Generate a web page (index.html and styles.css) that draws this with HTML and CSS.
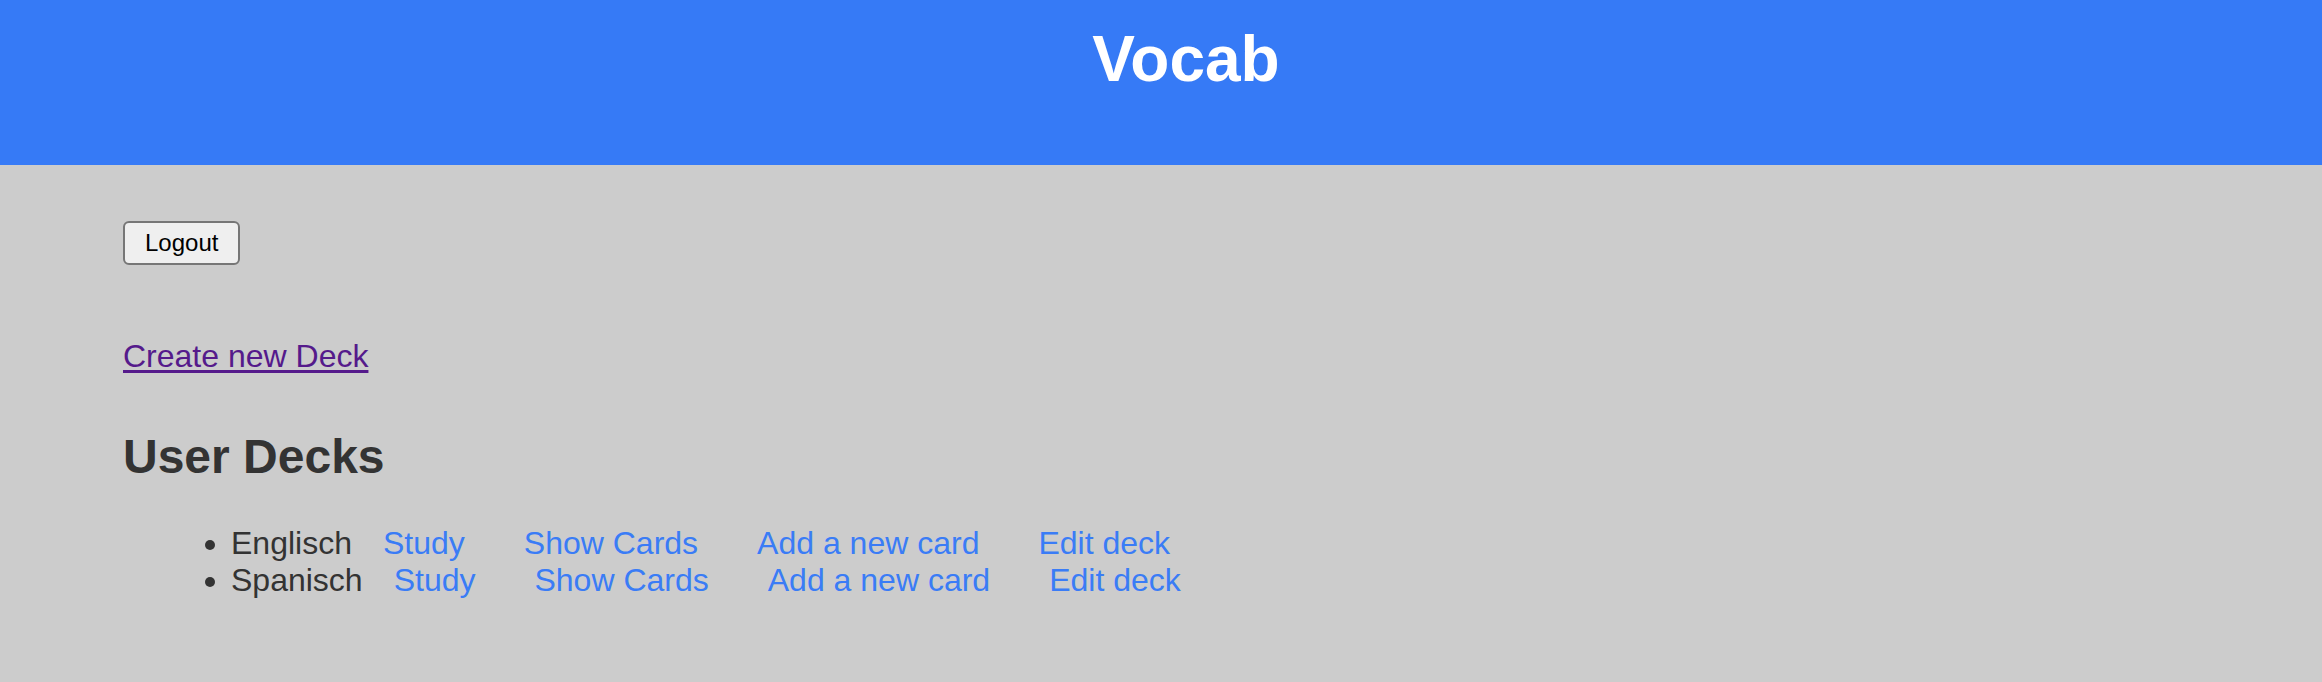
FILE: index.html
```html
<!DOCTYPE html>
<html lang="en">
<head>
<meta charset="utf-8">
<title>Vocab</title>
<link rel="stylesheet" href="styles.css">
</head>
<body>
<header class="topbar">
  <h1 class="title">Vocab</h1>
</header>
<main class="content">
  <div class="actions">
    <button class="logout" type="button">Logout</button>
  </div>
  <a class="create-link" href="#">Create new Deck</a>
  <h2 class="section-title">User Decks</h2>
  <ul class="deck-list">
    <li class="deck"><span class="deck-name">Englisch</span><a class="deck-link" href="#">Study</a><a class="deck-link" href="#">Show Cards</a><a class="deck-link" href="#">Add a new card</a><a class="deck-link" href="#">Edit deck</a></li>
    <li class="deck"><span class="deck-name">Spanisch</span><a class="deck-link" href="#">Study</a><a class="deck-link" href="#">Show Cards</a><a class="deck-link" href="#">Add a new card</a><a class="deck-link" href="#">Edit deck</a></li>
  </ul>
</main>
</body>
</html>
```
FILE: styles.css
```css
html, body {
  margin: 0;
  padding: 0;
}

body {
  background: #cccccc;
  font-family: "Liberation Sans", Arial, sans-serif;
  color: #333333;
  min-height: 682px;
}

.topbar {
  background: #367af6;
  height: 165px;
  box-sizing: border-box;
  padding: 23px 0 0 50px;
  text-align: center;
}

.title {
  margin: 0;
  font-size: 64px;
  line-height: 72px;
  font-weight: bold;
  color: #ffffff;
}

.content {
  padding-left: 123px;
}

.actions {
  padding-top: 56px;
  line-height: 0;
}

.logout {
  font-family: "Liberation Sans", Arial, sans-serif;
  font-size: 24px;
  line-height: 28px;
  color: #000000;
  background: #efefef;
  border: 2px solid #767676;
  border-radius: 6px;
  padding: 6px 20px;
  margin: 0;
  height: 44px;
  box-sizing: border-box;
}

.create-link {
  display: inline-block;
  margin-top: 73px;
  font-size: 32px;
  line-height: 37px;
  color: #551a8b;
  text-decoration: underline;
  text-underline-offset: 3px;
}

.section-title {
  margin: 54px 0 0;
  font-size: 48px;
  line-height: 55px;
  font-weight: bold;
  color: #333333;
}

.deck-list {
  margin: 41px 0 0;
  padding-left: 108px;
  font-size: 32px;
  line-height: 37px;
  color: #333333;
}

.deck-name {
  margin-right: 31px;
}

.deck-link {
  color: #3a7cf6;
  text-decoration: none;
}

.deck-link + .deck-link {
  margin-left: 59px;
}
```
